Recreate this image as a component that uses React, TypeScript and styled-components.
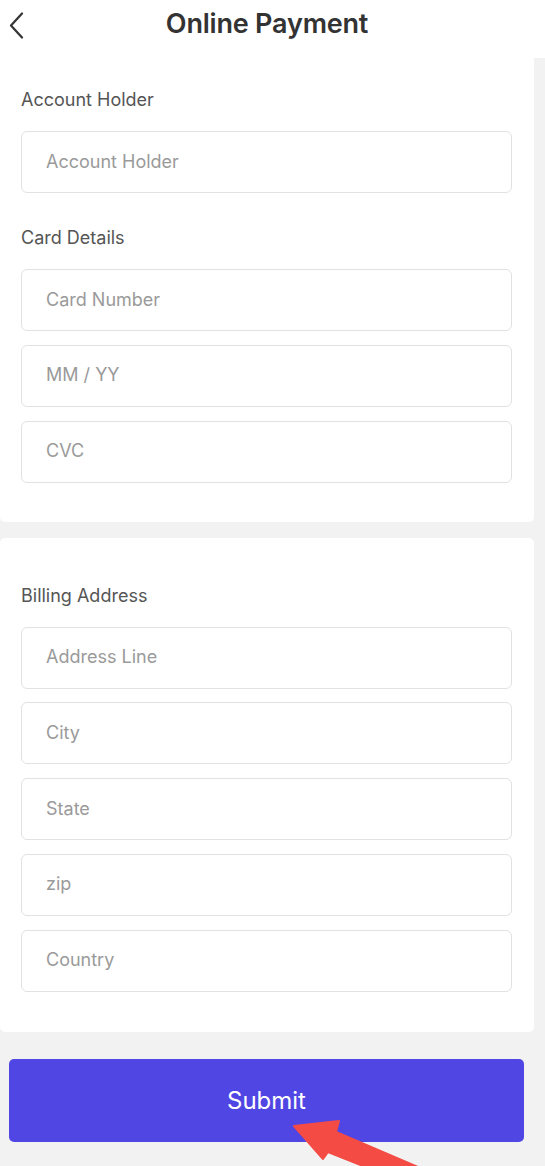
import React from "react";
import styled, { createGlobalStyle } from "styled-components";

const Global = createGlobalStyle`
  html, body { margin: 0; padding: 0; background: #f2f2f2; }
  body { font-family: Inter, "Noto Sans", sans-serif; }
  * { box-sizing: border-box; }
`;

const Page = styled.div`
  position: relative;
  width: 545px;
  min-height: 1166px;
  overflow: hidden;
  background: #f2f2f2;
`;

const Header = styled.header`
  position: relative;
  height: 58px;
  background: #fff;
  display: flex;
  align-items: center;
  justify-content: center;
  padding-right: 11px;
`;

const BackButton = styled.button`
  position: absolute;
  left: 4px;
  top: 8px;
  width: 24px;
  height: 34px;
  padding: 0;
  border: none;
  background: transparent;
  display: flex;
  align-items: center;
  justify-content: center;
`;

const Title = styled.h1`
  margin: 0;
  margin-top: -12px;
  font-size: 27px;
  font-weight: 600;
  color: #333;
  letter-spacing: -0.2px;
`;

const Card = styled.section<{ $top: number; $bottom: number }>`
  width: 534px;
  background: #fff;
  border-radius: 0 0 5px 5px;
  padding: ${(p) => p.$top}px 21px ${(p) => p.$bottom}px 21px;
  display: flex;
  flex-direction: column;
  & + & { margin-top: 16px; border-radius: 5px; }
`;

const Label = styled.div<{ $gap?: number }>`
  font-size: 18px;
  line-height: 22px;
  color: #555;
  margin-top: ${(p) => p.$gap ?? 0}px;
  margin-bottom: 20px;
`;

const Fields = styled.div`
  display: flex;
  flex-direction: column;
  gap: 13.75px;
`;

const Input = styled.input`
  width: 491px;
  height: 62px;
  border: 1px solid #e2e2e2;
  border-radius: 6px;
  padding: 0 24px 2px;
  font-family: Inter, "Noto Sans", sans-serif;
  font-size: 18px;
  color: #333;
  background: #fff;
  outline: none;
  &::placeholder { color: #9a9a9a; }
`;

const Footer = styled.div`
  padding: 27px 21px 0 9px;
`;

const SubmitButton = styled.button`
  width: 515px;
  height: 83px;
  border: none;
  border-radius: 5px;
  background: #5046e4;
  color: #fff;
  font-family: Inter, "Noto Sans", sans-serif;
  font-size: 24px;
  font-weight: 400;
  padding: 0;
`;

const Arrow = styled.svg`
  position: absolute;
  left: 0;
  top: 0;
  pointer-events: none;
`;

export default function App() {
  return (
    <Page>
      <Global />
      <Header>
        <BackButton aria-label="back">
          <svg width="16" height="27" viewBox="0 0 16 27">
            <path d="M14 1.5 L3 13.5 L14 25.5" fill="none" stroke="#333" strokeWidth="2.2" strokeLinecap="round" strokeLinejoin="round" />
          </svg>
        </BackButton>
        <Title>Online Payment</Title>
      </Header>
      <Card $top={31} $bottom={39}>
        <Label>Account Holder</Label>
        <Input placeholder="Account Holder" />
        <Label $gap={34}>Card Details</Label>
        <Fields>
          <Input placeholder="Card Number" />
          <Input placeholder="MM / YY" />
          <Input placeholder="CVC" />
        </Fields>
      </Card>
      <Card $top={47} $bottom={40}>
        <Label>Billing Address</Label>
        <Fields>
          <Input placeholder="Address Line" />
          <Input placeholder="City" />
          <Input placeholder="State" />
          <Input placeholder="zip" />
          <Input placeholder="Country" />
        </Fields>
      </Card>
      <Footer>
        <SubmitButton>Submit</SubmitButton>
      </Footer>
      <Arrow width="545" height="1166" viewBox="0 0 545 1166">
        <polygon
          points="294,1126 339,1121 336,1132 425,1170 378,1172 328,1152 323,1159"
          fill="#f44b45"
          stroke="#f44b45"
          strokeWidth="2"
          strokeLinejoin="round"
        />
      </Arrow>
    </Page>
  );
}
